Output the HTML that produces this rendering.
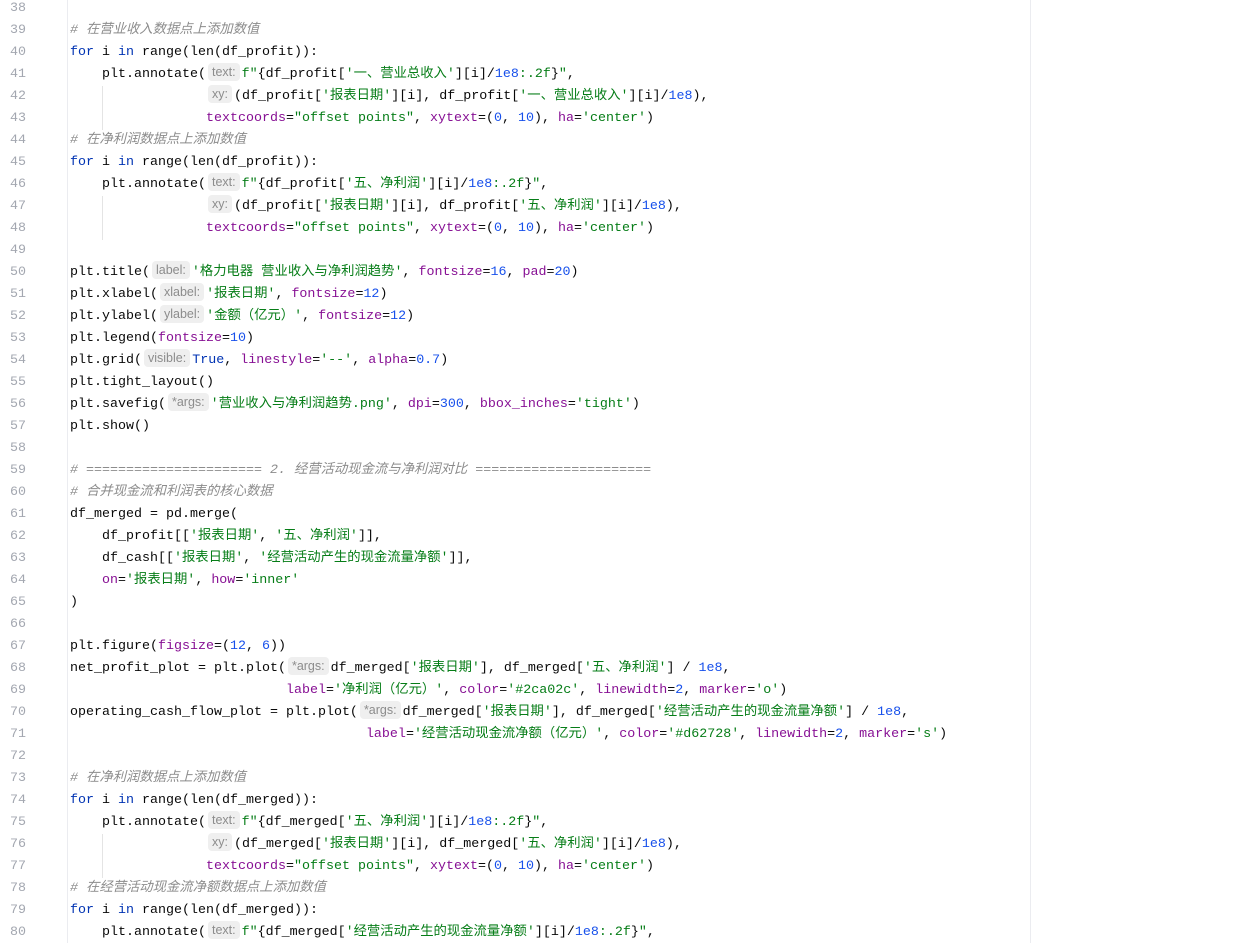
<!DOCTYPE html>
<html><head><meta charset="utf-8"><style>
body{margin:0;width:1241px;height:943px;background:#fff;overflow:hidden;position:relative;font-family:"Liberation Mono","Noto Sans CJK SC",monospace;font-size:13.33px;color:#080808}
.g{position:absolute;left:67px;top:0;width:1px;height:943px;background:#ebecf0}
.m{position:absolute;left:1030px;top:0;width:1px;height:943px;background:#ebecf0}
.ig{position:absolute;width:1px;background:#e4e4e4;left:102px}
#c{position:absolute;top:-2px;left:0}
.l{height:22px;line-height:22px;white-space:pre;position:relative}
.n{position:absolute;left:0;width:26px;text-align:right;color:#a3a7b0}
.t{position:absolute;left:70px}
.k{color:#0033b3}.d{color:#1750eb}.s{color:#067d17}.p{color:#871094}.c{color:#8c8c8c;font-style:italic}
.h{display:inline-block;font-family:"Liberation Sans",sans-serif;font-size:12.5px;color:#8c8c8c;background:#efefef;border-radius:4px;padding:1px 4px;line-height:16px;margin:0 2px;vertical-align:baseline;position:relative;top:-1px}
</style></head><body>
<div class="g"></div><div class="m"></div>
<div class="ig" style="top:86px;height:44px"></div>
<div class="ig" style="top:196px;height:44px"></div>
<div class="ig" style="top:834px;height:44px"></div>
<div id="c">
<div class="l"><span class="n">38</span><span class="t"></span></div>
<div class="l"><span class="n">39</span><span class="t c"># 在营业收入数据点上添加数值</span></div>
<div class="l"><span class="n">40</span><span class="t"><span class="k">for</span> i <span class="k">in</span> range(len(df_profit)):</span></div>
<div class="l"><span class="n">41</span><span class="t">    plt.annotate(<span class="h">text:</span><span class="s">f"</span>{df_profit[<span class="s">'一、营业总收入'</span>][i]/<span class="d">1e8</span><span class="s">:.2f</span>}<span class="s">"</span>,</span></div>
<div class="l"><span class="n">42</span><span class="t">                 <span class="h">xy:</span>(df_profit[<span class="s">'报表日期'</span>][i], df_profit[<span class="s">'一、营业总收入'</span>][i]/<span class="d">1e8</span>),</span></div>
<div class="l"><span class="n">43</span><span class="t">                 <span class="p">textcoords</span>=<span class="s">"offset points"</span>, <span class="p">xytext</span>=(<span class="d">0</span>, <span class="d">10</span>), <span class="p">ha</span>=<span class="s">'center'</span>)</span></div>
<div class="l"><span class="n">44</span><span class="t c"># 在净利润数据点上添加数值</span></div>
<div class="l"><span class="n">45</span><span class="t"><span class="k">for</span> i <span class="k">in</span> range(len(df_profit)):</span></div>
<div class="l"><span class="n">46</span><span class="t">    plt.annotate(<span class="h">text:</span><span class="s">f"</span>{df_profit[<span class="s">'五、净利润'</span>][i]/<span class="d">1e8</span><span class="s">:.2f</span>}<span class="s">"</span>,</span></div>
<div class="l"><span class="n">47</span><span class="t">                 <span class="h">xy:</span>(df_profit[<span class="s">'报表日期'</span>][i], df_profit[<span class="s">'五、净利润'</span>][i]/<span class="d">1e8</span>),</span></div>
<div class="l"><span class="n">48</span><span class="t">                 <span class="p">textcoords</span>=<span class="s">"offset points"</span>, <span class="p">xytext</span>=(<span class="d">0</span>, <span class="d">10</span>), <span class="p">ha</span>=<span class="s">'center'</span>)</span></div>
<div class="l"><span class="n">49</span><span class="t"></span></div>
<div class="l"><span class="n">50</span><span class="t">plt.title(<span class="h">label:</span><span class="s">'格力电器 营业收入与净利润趋势'</span>, <span class="p">fontsize</span>=<span class="d">16</span>, <span class="p">pad</span>=<span class="d">20</span>)</span></div>
<div class="l"><span class="n">51</span><span class="t">plt.xlabel(<span class="h">xlabel:</span><span class="s">'报表日期'</span>, <span class="p">fontsize</span>=<span class="d">12</span>)</span></div>
<div class="l"><span class="n">52</span><span class="t">plt.ylabel(<span class="h">ylabel:</span><span class="s">'金额（亿元）'</span>, <span class="p">fontsize</span>=<span class="d">12</span>)</span></div>
<div class="l"><span class="n">53</span><span class="t">plt.legend(<span class="p">fontsize</span>=<span class="d">10</span>)</span></div>
<div class="l"><span class="n">54</span><span class="t">plt.grid(<span class="h">visible:</span><span class="k">True</span>, <span class="p">linestyle</span>=<span class="s">'--'</span>, <span class="p">alpha</span>=<span class="d">0.7</span>)</span></div>
<div class="l"><span class="n">55</span><span class="t">plt.tight_layout()</span></div>
<div class="l"><span class="n">56</span><span class="t">plt.savefig(<span class="h">*args:</span><span class="s">'营业收入与净利润趋势.png'</span>, <span class="p">dpi</span>=<span class="d">300</span>, <span class="p">bbox_inches</span>=<span class="s">'tight'</span>)</span></div>
<div class="l"><span class="n">57</span><span class="t">plt.show()</span></div>
<div class="l"><span class="n">58</span><span class="t"></span></div>
<div class="l"><span class="n">59</span><span class="t c"># ====================== 2. 经营活动现金流与净利润对比 ======================</span></div>
<div class="l"><span class="n">60</span><span class="t c"># 合并现金流和利润表的核心数据</span></div>
<div class="l"><span class="n">61</span><span class="t">df_merged = pd.merge(</span></div>
<div class="l"><span class="n">62</span><span class="t">    df_profit[[<span class="s">'报表日期'</span>, <span class="s">'五、净利润'</span>]],</span></div>
<div class="l"><span class="n">63</span><span class="t">    df_cash[[<span class="s">'报表日期'</span>, <span class="s">'经营活动产生的现金流量净额'</span>]],</span></div>
<div class="l"><span class="n">64</span><span class="t">    <span class="p">on</span>=<span class="s">'报表日期'</span>, <span class="p">how</span>=<span class="s">'inner'</span></span></div>
<div class="l"><span class="n">65</span><span class="t">)</span></div>
<div class="l"><span class="n">66</span><span class="t"></span></div>
<div class="l"><span class="n">67</span><span class="t">plt.figure(<span class="p">figsize</span>=(<span class="d">12</span>, <span class="d">6</span>))</span></div>
<div class="l"><span class="n">68</span><span class="t">net_profit_plot = plt.plot(<span class="h">*args:</span>df_merged[<span class="s">'报表日期'</span>], df_merged[<span class="s">'五、净利润'</span>] / <span class="d">1e8</span>,</span></div>
<div class="l"><span class="n">69</span><span class="t">                           <span class="p">label</span>=<span class="s">'净利润（亿元）'</span>, <span class="p">color</span>=<span class="s">'#2ca02c'</span>, <span class="p">linewidth</span>=<span class="d">2</span>, <span class="p">marker</span>=<span class="s">'o'</span>)</span></div>
<div class="l"><span class="n">70</span><span class="t">operating_cash_flow_plot = plt.plot(<span class="h">*args:</span>df_merged[<span class="s">'报表日期'</span>], df_merged[<span class="s">'经营活动产生的现金流量净额'</span>] / <span class="d">1e8</span>,</span></div>
<div class="l"><span class="n">71</span><span class="t">                                     <span class="p">label</span>=<span class="s">'经营活动现金流净额（亿元）'</span>, <span class="p">color</span>=<span class="s">'#d62728'</span>, <span class="p">linewidth</span>=<span class="d">2</span>, <span class="p">marker</span>=<span class="s">'s'</span>)</span></div>
<div class="l"><span class="n">72</span><span class="t"></span></div>
<div class="l"><span class="n">73</span><span class="t c"># 在净利润数据点上添加数值</span></div>
<div class="l"><span class="n">74</span><span class="t"><span class="k">for</span> i <span class="k">in</span> range(len(df_merged)):</span></div>
<div class="l"><span class="n">75</span><span class="t">    plt.annotate(<span class="h">text:</span><span class="s">f"</span>{df_merged[<span class="s">'五、净利润'</span>][i]/<span class="d">1e8</span><span class="s">:.2f</span>}<span class="s">"</span>,</span></div>
<div class="l"><span class="n">76</span><span class="t">                 <span class="h">xy:</span>(df_merged[<span class="s">'报表日期'</span>][i], df_merged[<span class="s">'五、净利润'</span>][i]/<span class="d">1e8</span>),</span></div>
<div class="l"><span class="n">77</span><span class="t">                 <span class="p">textcoords</span>=<span class="s">"offset points"</span>, <span class="p">xytext</span>=(<span class="d">0</span>, <span class="d">10</span>), <span class="p">ha</span>=<span class="s">'center'</span>)</span></div>
<div class="l"><span class="n">78</span><span class="t c"># 在经营活动现金流净额数据点上添加数值</span></div>
<div class="l"><span class="n">79</span><span class="t"><span class="k">for</span> i <span class="k">in</span> range(len(df_merged)):</span></div>
<div class="l"><span class="n">80</span><span class="t">    plt.annotate(<span class="h">text:</span><span class="s">f"</span>{df_merged[<span class="s">'经营活动产生的现金流量净额'</span>][i]/<span class="d">1e8</span><span class="s">:.2f</span>}<span class="s">"</span>,</span></div>
</div>
</body></html>
